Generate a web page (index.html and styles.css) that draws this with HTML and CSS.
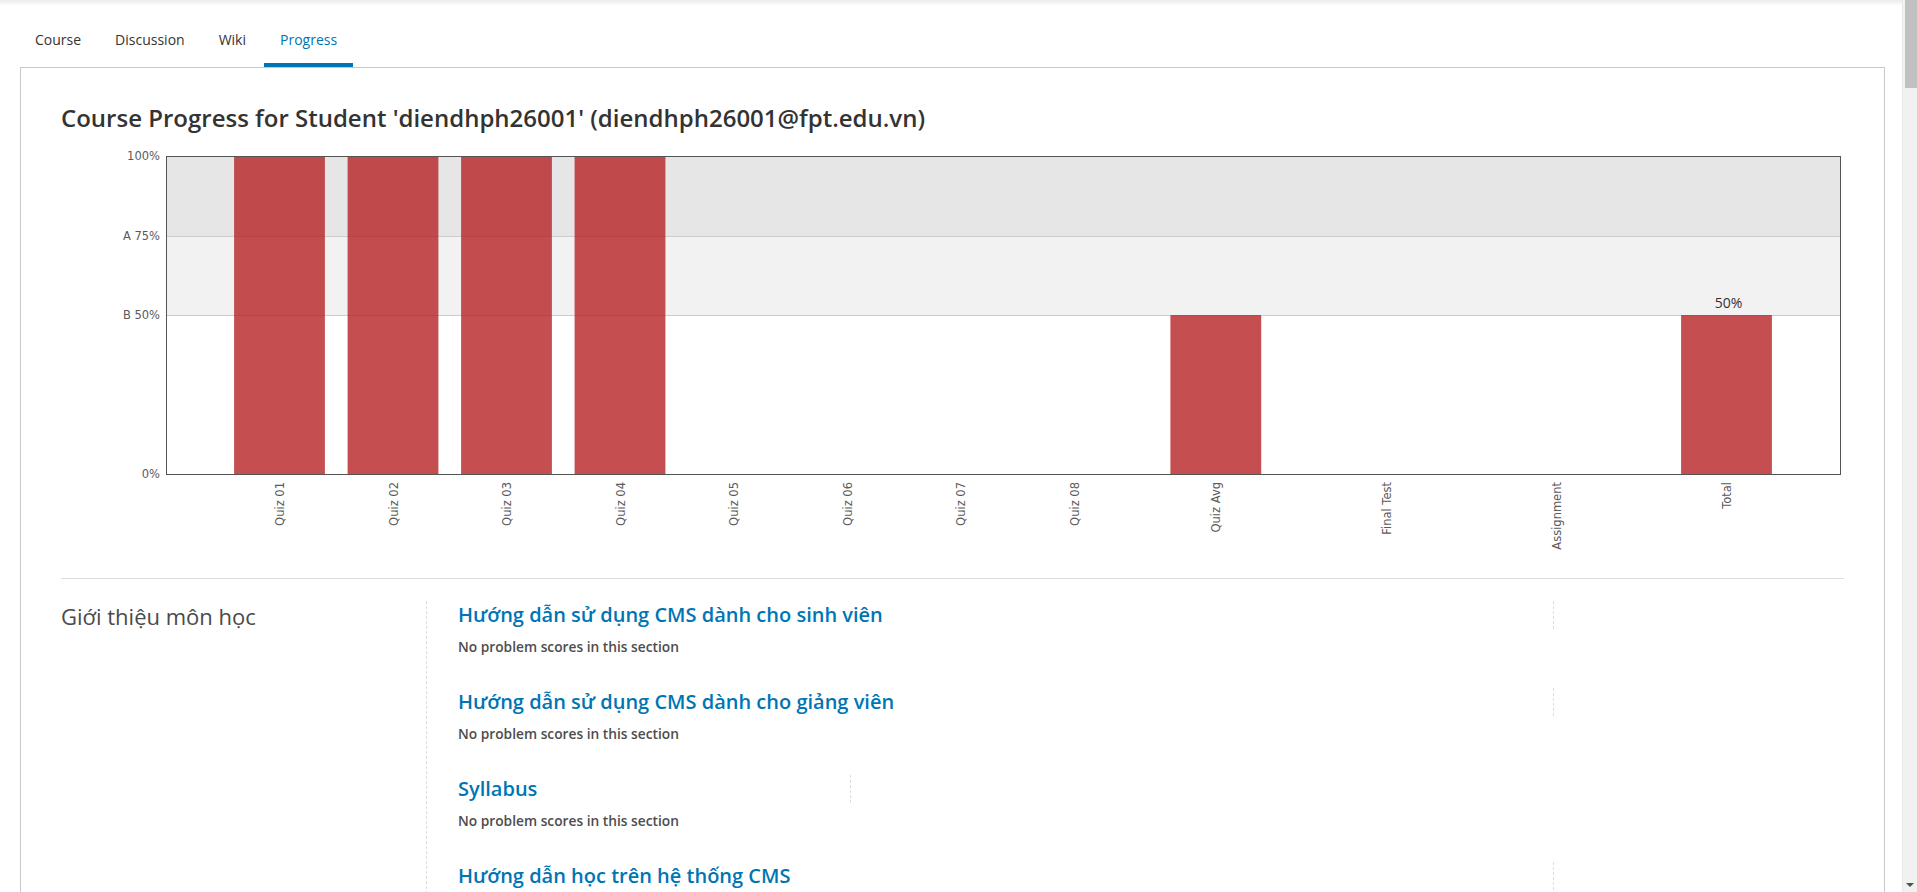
FILE: index.html
```html
<!DOCTYPE html>
<html lang="vi">
<head>
<meta charset="utf-8">
<title>Progress</title>
<link rel="stylesheet" href="styles.css">
</head>
<body>
<div class="page">
  <div class="topbar"></div>
  <nav class="tabs">
    <a class="tab" href="#">Course</a>
    <a class="tab" href="#">Discussion</a>
    <a class="tab" href="#">Wiki</a>
    <a class="tab tab--active" href="#">Progress</a>
  </nav>
  <main class="course-box">
    <h1 class="page-title">Course Progress for Student 'diendhph26001' (diendhph26001@fpt.edu.vn)</h1>
    <svg class="grade-chart" width="1783" height="432" viewBox="0 0 1783 432">
      <rect class="band-a" x="105" y="10" width="1675" height="80"/>
      <rect class="band-b" x="105" y="90" width="1675" height="79"/>
      <line class="grid" x1="105" y1="90.5" x2="1780" y2="90.5"/>
      <line class="grid" x1="105" y1="169.5" x2="1780" y2="169.5"/>
      <rect class="bar" x="173.1" y="10" width="90.8" height="318"/>
      <rect class="bar" x="286.6" y="10" width="90.8" height="318"/>
      <rect class="bar" x="400.1" y="10" width="90.8" height="318"/>
      <rect class="bar" x="513.6" y="10" width="90.8" height="318"/>
      <rect class="bar" x="1109.4" y="169" width="90.8" height="159"/>
      <rect class="bar" x="1620.1" y="169" width="90.8" height="159"/>
      <rect class="frame" x="105.5" y="10.5" width="1674" height="318"/>
      <g class="ylabels">
        <text x="99" y="10">100%</text>
        <text x="99" y="90">A 75%</text>
        <text x="99" y="169">B 50%</text>
        <text x="99" y="328">0%</text>
      </g>
      <g class="xlabels">
        <text transform="translate(219,336) rotate(-90)">Quiz 01</text>
        <text transform="translate(332.5,336) rotate(-90)">Quiz 02</text>
        <text transform="translate(446,336) rotate(-90)">Quiz 03</text>
        <text transform="translate(559.5,336) rotate(-90)">Quiz 04</text>
        <text transform="translate(673,336) rotate(-90)">Quiz 05</text>
        <text transform="translate(786.5,336) rotate(-90)">Quiz 06</text>
        <text transform="translate(900,336) rotate(-90)">Quiz 07</text>
        <text transform="translate(1013.5,336) rotate(-90)">Quiz 08</text>
        <text transform="translate(1155.3,336) rotate(-90)">Quiz Avg</text>
        <text transform="translate(1325.5,336) rotate(-90)">Final Test</text>
        <text transform="translate(1495.8,336) rotate(-90)">Assignment</text>
        <text transform="translate(1666,336) rotate(-90)">Total</text>
      </g>
      <text class="total-label" x="1667.5" y="162">50%</text>
    </svg>

    <section class="chapter">
      <h2 class="chapter-title">Giới thiệu môn học</h2>
      <div class="sections">
        <div class="sec">
          <div class="sec-head">
            <h3 class="sec-title sec-title--wide">Hướng dẫn sử dụng CMS dành cho sinh viên</h3>
            <div class="sec-scores"></div>
          </div>
          <p class="sec-note">No problem scores in this section</p>
        </div>
        <div class="sec">
          <div class="sec-head">
            <h3 class="sec-title sec-title--wide">Hướng dẫn sử dụng CMS dành cho giảng viên</h3>
            <div class="sec-scores"></div>
          </div>
          <p class="sec-note">No problem scores in this section</p>
        </div>
        <div class="sec">
          <div class="sec-head">
            <h3 class="sec-title sec-title--narrow">Syllabus</h3>
            <div class="sec-scores"></div>
          </div>
          <p class="sec-note">No problem scores in this section</p>
        </div>
        <div class="sec">
          <div class="sec-head">
            <h3 class="sec-title sec-title--wide">Hướng dẫn học trên hệ thống CMS</h3>
            <div class="sec-scores"></div>
          </div>
          <p class="sec-note">No problem scores in this section</p>
        </div>
      </div>
    </section>
  </main>
</div>
<div class="scrollbar" aria-hidden="true">
  <div class="scrollbar-thumb"></div>
  <div class="scrollbar-arrow"></div>
</div>
</body>
</html>
```

FILE: styles.css
```css
html, body {
  margin: 0;
  padding: 0;
  background: #fff;
}
body {
  display: flex;
  align-items: flex-start;
  font-family: "Open Sans", "Noto Sans", sans-serif;
  color: #333;
}
.page {
  flex: 1;
  min-width: 0;
}
.scrollbar {
  flex: none;
  width: 15px;
  height: 100vh;
  box-sizing: border-box;
  background: #f1f1f1;
  border-left: 1px solid #e9e9e9;
  display: flex;
  flex-direction: column;
  align-items: flex-end;
}
.scrollbar-thumb {
  width: 12px;
  height: 88px;
  background: #c1c1c1;
}
.scrollbar-arrow {
  margin: auto 3px 5px 0;
  width: 0;
  height: 0;
  border-left: 4px solid transparent;
  border-right: 4px solid transparent;
  border-top: 4px solid #505050;
}
.topbar {
  height: 6px;
  background: linear-gradient(to bottom, #ebebeb, #ffffff);
}
.tabs {
  display: flex;
  gap: 2px;
  padding: 10px 0 0 19px;
}
.tab {
  display: block;
  padding: 14px 16px 13px;
  font-size: 14px;
  line-height: 20px;
  color: #333;
  text-decoration: none;
  border-bottom: 4px solid transparent;
}
.tab--active {
  color: #0075b4;
  border-bottom-color: #0075b4;
}
.course-box {
  margin: 0 17px 0 20px;
  border: 1px solid #c8c8c8;
  padding: 35px 40px 0;
  min-height: 1200px;
}
.page-title {
  margin: 0 0 14px;
  font-size: 24px;
  line-height: 29px;
  font-weight: 600;
  color: #333;
}
.grade-chart {
  display: block;
  font-family: "DejaVu Sans", "Open Sans", sans-serif;
}
.band-a { fill: #e6e6e6; }
.band-b { fill: #f2f2f2; }
.grid { stroke: #cdcdcd; stroke-width: 1; }
.bar { fill: rgba(183, 34, 36, 0.8); }
.frame { fill: none; stroke: #545454; stroke-width: 1; }
.ylabels text {
  font-size: 11.5px;
  fill: #5a5a5a;
  text-anchor: end;
  dominant-baseline: central;
}
.xlabels text {
  font-size: 11.5px;
  fill: #5a5a5a;
  text-anchor: end;
  dominant-baseline: central;
}
.total-label {
  font-family: "Open Sans", "Noto Sans", sans-serif;
  font-size: 14px;
  fill: #333;
  text-anchor: middle;
}
.chapter {
  border-top: 1px solid #dddddd;
  padding-top: 22px;
  display: grid;
  grid-template-columns: 365px 1fr;
}
.chapter-title {
  margin: 0;
  font-size: 22px;
  line-height: 30px;
  font-weight: 400;
  color: #4a4a4a;
}
.sections {
  border-left: 1px dashed #dddddd;
  padding-left: 31px;
}
.sec {
  margin-bottom: 31px;
}
.sec-head {
  display: flex;
  height: 28px;
}
.sec-title {
  margin: 0;
  font-size: 20px;
  line-height: 28px;
  font-weight: 600;
  color: #0075b4;
  white-space: nowrap;
}
.sec-title--wide { width: 1095px; }
.sec-title--narrow { width: 392px; }
.sec-scores {
  border-left: 1px dashed #dddddd;
  height: 28px;
}
.sec-note {
  margin: 8px 0 0;
  font-size: 13.75px;
  line-height: 20px;
  font-weight: 600;
  color: #4d4d4d;
}
```
